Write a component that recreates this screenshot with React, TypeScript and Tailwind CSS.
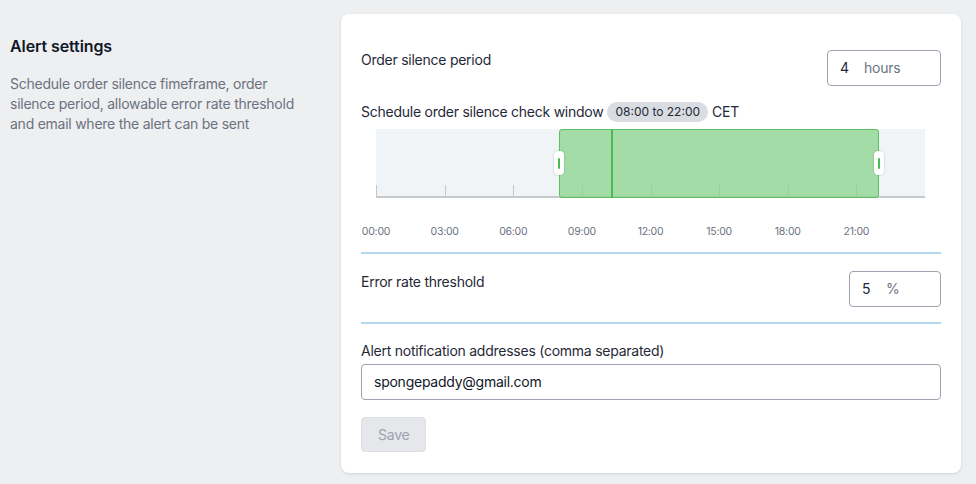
import React from 'react';

const HOUR = 22.875;
const PLOT_LEFT = 15;
const ticks = [0, 3, 6, 9, 12, 15, 18, 21];
const pad = (h: number) => `${String(h).padStart(2, '0')}:00`;

const Divider = () => <div className="h-[2px] bg-[#b2d7ee]" />;

const UnitInput: React.FC<{ value: string; unit: string; width: string }> = ({ value, unit, width }) => (
  <div className={`${width} h-9 flex items-center rounded border border-[#9ca3af] pl-3 text-sm`}>
    <span className="text-[#1f2937] w-6">{value}</span>
    <span className="text-[#6b7280]">{unit}</span>
  </div>
);

const SilenceWindow: React.FC<{ from: number; to: number; now: number }> = ({ from, to, now }) => {
  const x = (h: number) => PLOT_LEFT + h * HOUR;
  return (
    <div className="relative h-[123px] mt-[7px]">
      {/* plot area */}
      <div className="absolute top-0 h-[69px] bg-[#f1f4f7]" style={{ left: PLOT_LEFT, width: 24 * HOUR }} />
      <div className="absolute top-[67px] h-[2px] bg-[#c6c8cb]" style={{ left: PLOT_LEFT, width: 24 * HOUR }} />
      {ticks.map((h) => (
        <div key={h} className="absolute top-[56px] h-[12px] w-px bg-[#c6c8cb]" style={{ left: x(h) }} />
      ))}
      {/* selected range */}
      <div
        className="absolute top-0 h-[69px] rounded-[3px] border border-[#5cc060] bg-[#88d48c]/75"
        style={{ left: x(from), width: (to - from) * HOUR }}
      />
      <div className="absolute top-0 h-[69px] w-[2px] bg-[#4cba50]" style={{ left: x(now) }} />
      {[from, to].map((h) => (
        <div
          key={h}
          className="absolute top-[22px] h-[24px] w-[10px] -translate-x-1/2 rounded-[4px] bg-white shadow-[0_0_2px_rgba(0,0,0,0.25)] flex items-center justify-center"
          style={{ left: x(h) }}
        >
          <div className="w-[2px] h-[11px] rounded bg-[#4cba50]" />
        </div>
      ))}
      {/* labels */}
      {ticks.map((h) => (
        <span
          key={h}
          className="absolute top-[96px] -translate-x-1/2 text-[10.5px] leading-[14px] text-[#6b7280]"
          style={{ left: x(h) }}
        >
          {pad(h)}
        </span>
      ))}
    </div>
  );
};

export default function App() {
  return (
    <div className="min-h-[484px] w-[976px] bg-[#eeeff1] flex font-['Inter',sans-serif] tracking-[-0.25px] text-[#1f2937]">
      {/* Left description */}
      <div className="w-[341px] pl-[10px] pr-[31px] pt-[34px]">
        <h2 className="text-base leading-6 font-semibold text-[#111827] tracking-[-0.1px]">Alert settings</h2>
        <p className="mt-4 text-sm leading-5 text-[#6b7280]">
          Schedule order silence fimeframe, order silence period, allowable error rate threshold and email where the alert can be sent
        </p>
      </div>

      {/* Card */}
      <div className="mt-[14px] mb-[11px] w-[620px] h-[459px] rounded-lg bg-white shadow-[0_1px_3px_rgba(0,0,0,0.12)] px-5 pt-9">
        <div className="flex items-start justify-between">
          <span className="text-sm leading-5">Order silence period</span>
          <UnitInput value="4" unit="hours" width="w-[114px]" />
        </div>

        <div className="mt-4 flex items-center text-sm leading-5">
          <span>Schedule order silence check window</span>
          <span className="ml-1 mr-1 rounded-full bg-[#d9dce0] px-2 text-xs leading-5 tracking-normal text-[#1f2937]">08:00 to 22:00</span>
          <span>CET</span>
        </div>

        <SilenceWindow from={8} to={22} now={10.27} />

        <Divider />

        <div className="mt-[17px] flex items-start justify-between">
          <span className="text-sm leading-5 mt-[1px]">Error rate threshold</span>
          <UnitInput value="5" unit="%" width="w-[92px]" />
        </div>

        <div className="mt-[15px]">
          <Divider />
        </div>

        <div className="mt-[17px] text-sm leading-5">Alert notification addresses (comma separated)</div>
        <div className="mt-[3px] h-9 flex items-center rounded border border-[#9ca3af] pl-3 text-sm text-[#111827]">
          spongepaddy@gmail.com
        </div>

        <button className="mt-[17px] h-[35px] px-4 rounded border border-[#dcdfe3] bg-[#e5e7eb] text-sm text-[#9ca3af]">
          Save
        </button>
      </div>
    </div>
  );
}
